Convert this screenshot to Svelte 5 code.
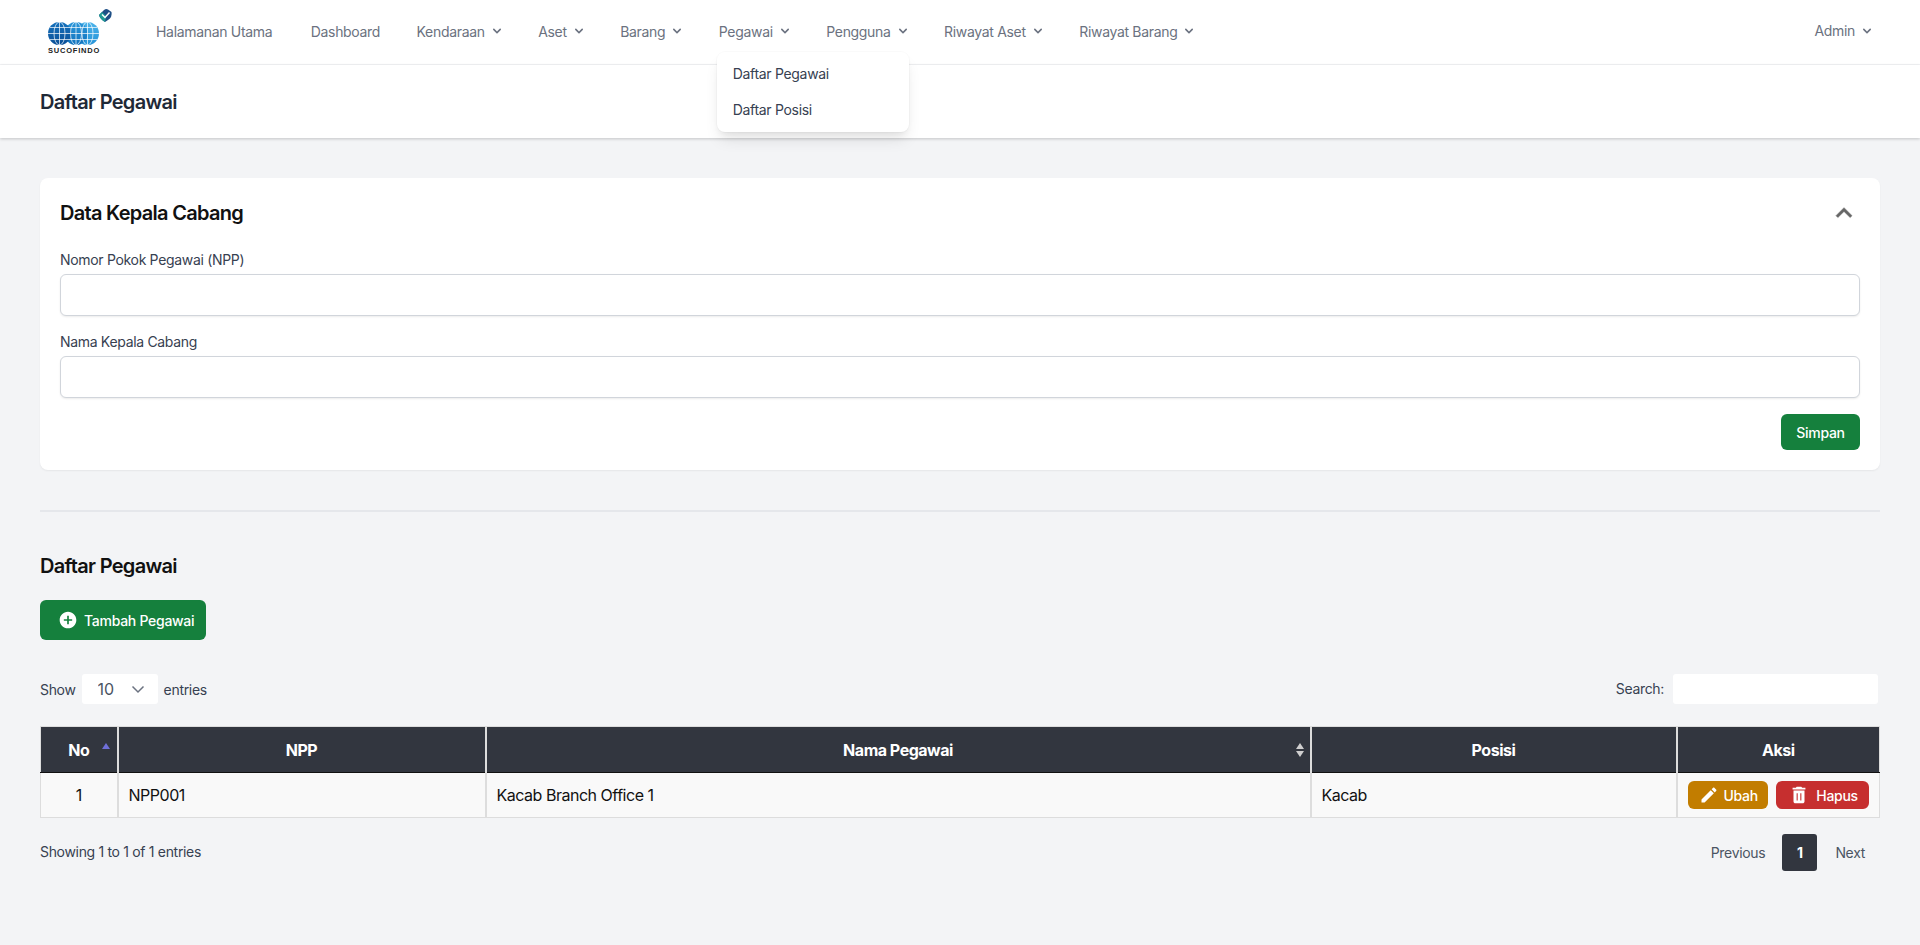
<script>
	const menu = [
		{ label: 'Halamanan Utama' },
		{ label: 'Dashboard' },
		{ label: 'Kendaraan', caret: true },
		{ label: 'Aset', caret: true },
		{ label: 'Barang', caret: true },
		{ label: 'Pegawai', caret: true, open: true, items: ['Daftar Pegawai', 'Daftar Posisi'] },
		{ label: 'Pengguna', caret: true },
		{ label: 'Riwayat Aset', caret: true },
		{ label: 'Riwayat Barang', caret: true }
	];
	let npp = $state('');
	let nama = $state('');
	let search = $state('');
	let perPage = $state('10');
	const rows = [{ no: 1, npp: 'NPP001', nama: 'Kacab Branch Office 1', posisi: 'Kacab' }];
</script>

{#snippet caret()}
	<svg class="caret" viewBox="0 0 20 20" fill="currentColor">
		<path
			fill-rule="evenodd"
			clip-rule="evenodd"
			d="M5.293 7.293a1 1 0 011.414 0L10 10.586l3.293-3.293a1 1 0 111.414 1.414l-4 4a1 1 0 01-1.414 0l-4-4a1 1 0 010-1.414z"
		/>
	</svg>
{/snippet}

<nav class="topbar">
	<a class="logo" href="#top" aria-label="Sucofindo">
		<svg width="70" height="48" viewBox="0 0 70 48">
			<defs>
				<linearGradient id="globe-a" x1="0" y1="1" x2="0" y2="0">
					<stop offset="0" stop-color="#0a4f96" />
					<stop offset="1" stop-color="#1672bd" />
				</linearGradient>
				<linearGradient id="globe-b" x1="0" y1="1" x2="0" y2="0">
					<stop offset="0" stop-color="#1272bd" />
					<stop offset="1" stop-color="#2a97da" />
				</linearGradient>
				<linearGradient id="globe-c" x1="0" y1="1" x2="0" y2="0">
					<stop offset="0" stop-color="#2593d8" />
					<stop offset="1" stop-color="#4db4ea" />
				</linearGradient>
			</defs>
			<path d="M55 7 L60 2 Q62 0.5 64 1.5 L67.5 4 Q68.5 9 64 12 L61 14 Q56 11 55 7z" fill="#1f4f86" />
			<path d="M55 7 L58 4 L62 8 L61 14 Q56 11 55 7z" fill="#1f9a94" />
			<path d="M58 6.5 L61 9.5 L65.5 4.5" fill="none" stroke="#fff" stroke-width="1.4" />
			<circle cx="43.5" cy="25.5" r="11.5" fill="url(#globe-c)" />
			<circle cx="32" cy="25.5" r="11.5" fill="url(#globe-b)" />
			<circle cx="15.5" cy="25.5" r="11.5" fill="url(#globe-a)" />
			<g fill="none" stroke="#fff" stroke-width="0.7">
				<ellipse cx="15.5" cy="25.5" rx="5.5" ry="11.5" />
				<ellipse cx="32" cy="25.5" rx="5.5" ry="11.5" />
				<ellipse cx="43.5" cy="25.5" rx="5.5" ry="11.5" />
				<path d="M15.5 14v23M32 14v23M43.5 14v23M4 25.5h51M6 19.5h47M6 31.5h47" />
			</g>
			<text x="4" y="45" class="logo-text" textLength="51">SUCOFINDO</text>
		</svg>
	</a>
	<ul class="links">
		{#each menu as item}
			<li class="link">
				<span>{item.label}</span>
				{#if item.caret}{@render caret()}{/if}
				{#if item.open}
					<div class="dropdown">
						{#each item.items as sub}
							<a href="#top">{sub}</a>
						{/each}
					</div>
				{/if}
			</li>
		{/each}
	</ul>
	<div class="user">
		<span>Admin</span>
		{@render caret()}
	</div>
</nav>

<header class="page-head">
	<h2>Daftar Pegawai</h2>
</header>

<main>
	<section class="card">
		<div class="card-head">
			<h3>Data Kepala Cabang</h3>
			<svg width="32" height="32" viewBox="0 0 24 24" fill="#666" stroke="#666" stroke-width="0.4">
				<path d="M12 8l-6 6 1.41 1.41L12 10.83l4.59 4.58L18 14z" />
			</svg>
		</div>
		<label class="first" for="npp">Nomor Pokok Pegawai (NPP)</label>
		<input id="npp" type="text" bind:value={npp} />
		<label for="nama">Nama Kepala Cabang</label>
		<input id="nama" type="text" bind:value={nama} />
		<div class="actions">
			<button class="btn green save">Simpan</button>
		</div>
	</section>

	<hr />

	<h3 class="list-title">Daftar Pegawai</h3>
	<button class="btn green add">
		<svg width="20" height="20" viewBox="0 0 24 24" fill="#fff">
			<path d="M12 2C6.48 2 2 6.48 2 12s4.48 10 10 10 10-4.48 10-10S17.52 2 12 2zm5 11h-4v4h-2v-4H7v-2h4V7h2v4h4v2z" />
		</svg>
		Tambah Pegawai
	</button>

	<div class="table-tools">
		<div class="length">
			Show
			<span class="select-wrap">
				<select bind:value={perPage}>
					<option>10</option>
					<option>25</option>
					<option>50</option>
					<option>100</option>
				</select>
				<svg class="select-arrow" width="20" height="20" viewBox="0 0 20 20" fill="none" stroke="#6b7280" stroke-width="1.5">
					<path d="M4.5 7.5L10 13l5.5-5.5" />
				</svg>
			</span>
			entries
		</div>
		<div class="search">
			<label for="search">Search:</label>
			<input id="search" type="search" bind:value={search} />
		</div>
	</div>

	<table>
		<colgroup>
			<col style="width: 77px" />
			<col style="width: 368px" />
			<col style="width: 825px" />
			<col style="width: 366px" />
			<col />
		</colgroup>
		<thead>
			<tr>
				<th>
					No
					<i class="sort-up"></i>
				</th>
				<th>NPP</th>
				<th>
					Nama Pegawai
					<i class="sort-both"></i>
				</th>
				<th>Posisi</th>
				<th>Aksi</th>
			</tr>
		</thead>
		<tbody>
			{#each rows as row}
				<tr>
					<td class="center">{row.no}</td>
					<td>{row.npp}</td>
					<td>{row.nama}</td>
					<td>{row.posisi}</td>
					<td class="aksi">
						<div class="row-actions">
							<button class="mini yellow">
								<svg width="20" height="20" viewBox="0 0 24 24" fill="#fff">
									<path d="M3 17.25V21h3.75L17.81 9.94l-3.75-3.75L3 17.25zM20.71 7.04c.39-.39.39-1.02 0-1.41l-2.34-2.34c-.39-.39-1.02-.39-1.41 0l-1.83 1.83 3.75 3.75 1.83-1.83z" />
								</svg>
								Ubah
							</button>
							<button class="mini red">
								<svg width="22" height="22" viewBox="0 0 24 24" fill="#fff">
									<path d="M6 19c0 1.1.9 2 2 2h8c1.1 0 2-.9 2-2V7H6v12zM19 4h-3.5l-1-1h-5l-1 1H5v2h14V4z" />
									<path d="M10 10v8M14 10v8" stroke="#c62f2f" stroke-width="1.2" />
								</svg>
								Hapus
							</button>
						</div>
					</td>
				</tr>
			{/each}
		</tbody>
	</table>

	<div class="table-foot">
		<div class="info">Showing 1 to 1 of 1 entries</div>
		<div class="pager">
			<span>Previous</span>
			<span class="current">1</span>
			<span>Next</span>
		</div>
	</div>
</main>

<style>
	:global(body) {
		background: #f3f4f6;
		font-family: Inter, 'Noto Sans', sans-serif;
		color: #111827;
		letter-spacing: -0.02em;
	}
	ul {
		list-style: none;
		margin: 0;
		padding: 0;
	}
	a {
		text-decoration: none;
		color: inherit;
	}
	.topbar {
		height: 64px;
		background: #fff;
		border-bottom: 1px solid #f3f4f6;
		display: flex;
		align-items: center;
		padding: 0 45px 0 44px;
		font-size: 14px;
		color: #6b7280;
	}
	.logo {
		width: 112px;
		height: 48px;
		display: block;
	}
	.logo-text {
		font-family: 'Liberation Sans', sans-serif;
		font-size: 7.5px;
		font-weight: 700;
		fill: #222;
	}
	.links {
		display: flex;
		gap: 33.5px;
		margin-top: -2px;
	}
	.link {
		position: relative;
		display: flex;
		align-items: center;
		gap: 4px;
	}
	.link:nth-child(2) {
		margin-left: 5px;
	}
	.link:nth-child(3) {
		margin-left: 3px;
	}
	.caret {
		width: 16px;
		height: 16px;
	}
	.dropdown {
		position: absolute;
		top: 29px;
		left: -2px;
		width: 192px;
		padding: 4px 0;
		background: #fff;
		border-radius: 8px;
		box-shadow: 0 10px 15px -3px rgba(0, 0, 0, 0.1), 0 4px 6px -2px rgba(0, 0, 0, 0.05), 0 0 0 1px rgba(0, 0, 0, 0.02);
		color: #374151;
		z-index: 5;
	}
	.dropdown a {
		display: block;
		padding: 8px 16px;
		line-height: 20px;
	}
	.user {
		margin-left: auto;
		display: flex;
		align-items: center;
		gap: 4px;
		margin-top: -3px;
	}
	.page-head {
		height: 73px;
		background: #fff;
		padding: 0 40px;
		display: flex;
		align-items: center;
		box-shadow: 0 1px 3px rgba(0, 0, 0, 0.2);
	}
	h2,
	h3 {
		margin: 0;
		font-size: 20px;
		line-height: 28px;
		font-weight: 600;
		letter-spacing: -0.035em;
		color: #111;
	}
	h2 {
		color: #1f2937;
	}
	main {
		padding: 40px 40px 0;
	}
	.card {
		background: #fff;
		border-radius: 8px;
		padding: 20px;
		box-shadow: 0 1px 2px rgba(0, 0, 0, 0.06);
	}
	.card-head {
		display: flex;
		justify-content: space-between;
		align-items: center;
		height: 30px;
		margin-bottom: 22px;
	}
	label {
		display: block;
		font-size: 14px;
		line-height: 20px;
		color: #374151;
		margin-bottom: 4px;
		margin-top: 16px;
	}
	label.first {
		margin-top: 0;
	}
	.card input {
		display: block;
		width: 100%;
		height: 42px;
		box-sizing: border-box;
		border: 1px solid #d1d5db;
		border-radius: 6px;
		background: #fff;
		box-shadow: 0 1px 2px rgba(0, 0, 0, 0.08);
	}
	.actions {
		display: flex;
		justify-content: flex-end;
		margin-top: 16px;
	}
	.btn {
		border: none;
		border-radius: 6px;
		color: #fff;
		font-family: inherit;
		font-size: 14px;
		font-weight: 500;
		letter-spacing: -0.02em;
		display: flex;
		align-items: center;
	}
	.green {
		background: #15803d;
	}
	.save {
		width: 79px;
		height: 36px;
		justify-content: center;
	}
	hr {
		border: none;
		height: 2px;
		background: #e5e7eb;
		margin: 40px 0;
	}
	.list-title {
		margin-bottom: 20px;
	}
	.add {
		width: 166px;
		height: 40px;
		padding: 0 0 0 18px;
		gap: 6px;
	}
	.table-tools,
	.table-foot {
		display: flex;
		justify-content: space-between;
		font-size: 14px;
		color: #374151;
	}
	.table-tools {
		margin-top: 34px;
		margin-bottom: 22px;
		height: 30px;
		align-items: center;
		padding-right: 2px;
	}
	.length,
	.search {
		display: flex;
		align-items: center;
		gap: 6px;
	}
	.search {
		gap: 9px;
	}
	.search label {
		margin: 0;
	}
	.select-wrap {
		position: relative;
		display: block;
	}
	select {
		appearance: none;
		width: 76px;
		height: 30px;
		border: none;
		border-radius: 3px;
		background: #fff;
		padding: 0 0 0 16px;
		font-family: inherit;
		font-size: 16px;
		color: #4b5563;
	}
	.select-arrow {
		position: absolute;
		right: 10px;
		top: 5px;
		pointer-events: none;
	}
	.search input {
		width: 205px;
		height: 30px;
		box-sizing: border-box;
		border: none;
		border-radius: 3px;
		background: #fff;
	}
	table {
		width: 1840px;
		table-layout: fixed;
		border-collapse: collapse;
		font-size: 16px;
		letter-spacing: -0.03em;
	}
	th {
		position: relative;
		height: 45px;
		padding: 0;
		background: #32363f;
		color: #fff;
		font-weight: 700;
		font-size: 16px;
		text-align: center;
		border: 2px solid #ddd;
		border-top-width: 1px;
		border-bottom: 1px solid #111;
	}
	th:first-child,
	td:first-child {
		border-left-width: 1px;
	}
	th:last-child,
	td:last-child {
		border-right-width: 1px;
	}
	.sort-up {
		position: absolute;
		right: 7px;
		top: 16px;
		border: 4px solid transparent;
		border-top: none;
		border-bottom: 6px solid #6f6fd8;
	}
	.sort-both {
		position: absolute;
		right: 6px;
		top: 16px;
		width: 0;
		border: 4px solid transparent;
		border-top: none;
		border-bottom: 6px solid #cfcfcf;
	}
	.sort-both::after {
		content: '';
		position: absolute;
		left: -4px;
		top: 8px;
		border: 4px solid transparent;
		border-bottom: none;
		border-top: 6px solid #cfcfcf;
	}
	td {
		height: 45px;
		box-sizing: border-box;
		padding: 0 10px;
		background: #f9f9f9;
		color: #111;
		border: 2px solid #ddd;
		border-top: none;
		border-bottom-width: 1px;
	}
	.center {
		text-align: center;
	}
	.row-actions {
		display: flex;
		gap: 8px;
	}
	.mini {
		display: flex;
		align-items: center;
		height: 28px;
		border: none;
		border-radius: 6px;
		color: #fff;
		font-family: inherit;
		font-size: 14px;
		font-weight: 500;
		letter-spacing: -0.02em;
	}
	.yellow {
		width: 81px;
		background: #c27d00;
		padding: 0 0 0 11px;
		gap: 5px;
	}
	.red {
		width: 93px;
		background: #c62f2f;
		padding: 0 0 0 12px;
		gap: 6px;
	}
	.table-foot {
		margin-top: 16px;
		align-items: center;
		height: 37px;
	}
	.info {
		margin-top: -2px;
	}
	.pager {
		display: flex;
		align-items: center;
		color: #4b5563;
	}
	.pager span {
		padding: 0 15px;
		line-height: 37px;
	}
	.pager .current {
		background: #32363f;
		color: #fff;
		font-weight: 700;
		border-radius: 3px;
		padding: 0;
		width: 35px;
		margin: 0 3px 0 2px;
		text-align: center;
	}
</style>
